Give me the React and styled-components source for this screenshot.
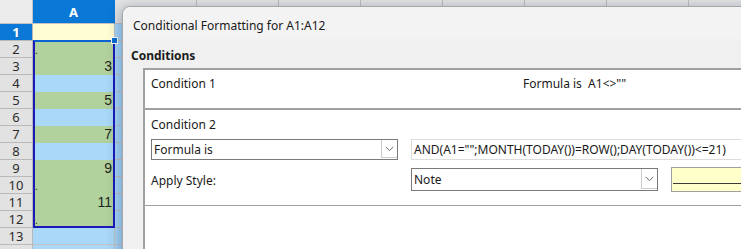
import React from "react";
import styled, { createGlobalStyle } from "styled-components";

const GlobalStyle = createGlobalStyle`
    html, body {
        margin: 0;
        padding: 0;
        overflow: hidden;
        background: #ffffff;
    }
`;

const COLS = ["A", "B", "C", "D", "E", "F", "G", "H", "I"];

const YELLOW = "#fffdd3";
const GREEN = "#b1d29c";
const BLUE = "#a9d8f8";

// column A contents: [fill, value, marker]
const colA = [
    [YELLOW, "", false],
    [GREEN, "", true],
    [GREEN, "3", false],
    [BLUE, "", false],
    [GREEN, "5", false],
    [BLUE, "", false],
    [GREEN, "7", false],
    [BLUE, "", false],
    [GREEN, "9", false],
    [GREEN, "", true],
    [GREEN, "11", false],
    [GREEN, "", true],
    [BLUE, "", false],
    [BLUE, "", false],
];

export default function App() {
    return (
        <Screen>
            <GlobalStyle />
            <Sheet>
                <Corner />
                {COLS.map((c, i) => (
                    // only column A is visible, the rest sit under the dialog
                    <ColHeader key={c} $active={i === 0}>
                        {i === 0 ? c : ""}
                    </ColHeader>
                ))}
                {colA.map(([fill, value, marker], r) => (
                    <React.Fragment key={r}>
                        <RowHeader $active={r === 0}>
                            {r < 13 ? r + 1 : ""}
                        </RowHeader>
                        <Cell $bg={fill} $grid={r === 0 || r > 11}>
                            {marker && <Marker>.</Marker>}
                            {value}
                        </Cell>
                        {COLS.slice(1).map((c) => (
                            <Cell key={c} $bg={BLUE} $grid />
                        ))}
                    </React.Fragment>
                ))}
            </Sheet>
            <Selection />
            <FillHandle />

            <Dialog>
                <TitleBar>Conditional Formatting for A1:A12</TitleBar>
                <Body>
                    <SectionLabel>Conditions</SectionLabel>
                    <ConditionList>
                        <ConditionSummary>
                            <span>Condition 1</span>
                            <Summary>Formula is  A1&lt;&gt;""</Summary>
                        </ConditionSummary>
                        <ConditionEditor>
                            <EditorTitle>Condition 2</EditorTitle>
                            <Select $h={21}>
                                <span>Formula is</span>
                                <Chevron />
                            </Select>
                            <FormulaInput>
                                AND(A1="";MONTH(TODAY())=ROW();DAY(TODAY())&lt;=21)
                            </FormulaInput>
                            <FieldLabel>Apply Style:</FieldLabel>
                            <StyleRow>
                                <Select $h={23}>
                                    <span>Note</span>
                                    <Chevron />
                                </Select>
                                <Preview />
                            </StyleRow>
                        </ConditionEditor>
                    </ConditionList>
                </Body>
            </Dialog>
        </Screen>
    );
}

function Chevron() {
    return (
        <ArrowButton>
            <svg width="9" height="6" viewBox="0 0 9 6">
                <path
                    d="M0.8 1 L4.5 4.6 L8.2 1"
                    fill="none"
                    stroke="#6b6b6b"
                    strokeWidth="1"
                />
            </svg>
        </ArrowButton>
    );
}

const Screen = styled.div`
    position: relative;
    width: 741px;
    height: 249px;
    overflow: hidden;
    background: #ffffff;
`;

const Sheet = styled.div`
    display: grid;
    grid-template-columns: 33px repeat(9, 82px);
    grid-template-rows: 24px repeat(14, 17px);
    font-family: "Liberation Sans", Arial, sans-serif;
`;

const Corner = styled.div`
    background: #ececec;
    border-right: 1px solid #c4c4c4;
    border-bottom: 1px solid #c4c4c4;
    box-sizing: border-box;
`;

const ColHeader = styled.div`
    box-sizing: border-box;
    display: flex;
    align-items: center;
    justify-content: center;
    background: ${(p) => (p.$active ? "#0a78d6" : "#e4e4e4")};
    color: ${(p) => (p.$active ? "#ffffff" : "#333333")};
    font-family: "Noto Sans", sans-serif;
    font-weight: 700;
    font-size: 13px;
    border-right: 1px solid ${(p) => (p.$active ? "#0a78d6" : "#bdbdbd")};
    border-bottom: 1px solid #c4c4c4;
    padding-top: 1px;
`;

const RowHeader = styled.div`
    box-sizing: border-box;
    display: flex;
    align-items: center;
    justify-content: center;
    background: ${(p) => (p.$active ? "#0a78d6" : "#e2e2e2")};
    color: ${(p) => (p.$active ? "#ffffff" : "#2b2b2b")};
    font-family: "Noto Sans", sans-serif;
    font-weight: ${(p) => (p.$active ? 700 : 400)};
    font-size: 13px;
    border-right: 1px solid #b9b9b9;
    border-bottom: 1px solid #b9b9b9;
`;

const Cell = styled.div`
    box-sizing: border-box;
    position: relative;
    display: flex;
    align-items: flex-end;
    justify-content: flex-end;
    padding: 0 2px 0 0;
    background: ${(p) => p.$bg};
    border-right: 1px solid ${(p) => (p.$grid ? "#c3c3c3" : p.$bg)};
    border-bottom: 1px solid ${(p) => (p.$grid ? "#c3c3c3" : p.$bg)};
    font-size: 14px;
    line-height: 16px;
    color: #1f1f1f;
`;

const Marker = styled.span`
    position: absolute;
    left: 2px;
    bottom: 1px;
    font-size: 10px;
    line-height: 10px;
`;

const Selection = styled.div`
    position: absolute;
    left: 33px;
    top: 40px;
    width: 82px;
    height: 188px;
    box-sizing: border-box;
    border: 2px solid #1a1ab8;
    border-top-color: #0b62d2;
`;

const FillHandle = styled.div`
    position: absolute;
    left: 111px;
    top: 37px;
    width: 5px;
    height: 5px;
    background: #0a6fd4;
    border: 1px solid #ffffff;
`;

const Dialog = styled.div`
    position: absolute;
    left: 122px;
    top: 6px;
    width: 700px;
    height: 300px;
    box-sizing: border-box;
    background: #f0f0f0;
    border: 1px solid #a6a6a6;
    border-top-left-radius: 8px;
    box-shadow: -2px 2px 14px rgba(0, 30, 80, 0.32);
    font-family: "Noto Sans", sans-serif;
    font-size: 12px;
    color: #1a1a1a;
`;

const TitleBar = styled.div`
    height: 32px;
    box-sizing: border-box;
    display: flex;
    align-items: center;
    padding: 4px 0 0 10px;
    background: #f3f3f3;
    border-top-left-radius: 8px;
`;

const Body = styled.div`
    padding-left: 8px;
`;

const SectionLabel = styled.div`
    font-weight: 700;
    line-height: 16px;
    margin-top: 9px;
`;

const ConditionList = styled.div`
    margin: 4px 0 0 12px;
    border: 2px solid #a0a0a0;
    border-right: none;
    background: #ffffff;
    height: 300px;
`;

const ConditionSummary = styled.div`
    height: 40px;
    box-sizing: border-box;
    padding: 6px 6px;
    line-height: 16px;
    display: grid;
    grid-template-columns: 372px 1fr;
    border-bottom: 2px solid #a0a0a0;
`;

const Summary = styled.span`
    white-space: pre;
`;

const ConditionEditor = styled.div`
    display: grid;
    grid-template-columns: 247px 1fr;
    column-gap: 13px;
    align-items: center;
    padding: 7px 0 13px 6px;
    border-bottom: 1px solid #a0a0a0;
    line-height: 16px;
`;

const EditorTitle = styled.div`
    grid-column: 1 / -1;
    margin-bottom: 6px;
`;

const Select = styled.div`
    height: ${(p) => p.$h}px;
    box-sizing: border-box;
    display: flex;
    align-items: center;
    justify-content: space-between;
    padding-left: 2px;
    border: 1px solid #7a7a7a;
    background: #ffffff;

    & > span {
        padding-top: 1px;
    }
`;

const ArrowButton = styled.div`
    align-self: stretch;
    width: 15px;
    margin: 0 0 1px 0;
    display: flex;
    align-items: center;
    justify-content: center;
    border: 1px solid #cccccc;
    border-top: none;
    border-right: none;
    background: #ffffff;
`;

const FormulaInput = styled.div`
    height: 21px;
    box-sizing: border-box;
    display: flex;
    align-items: center;
    padding: 1px 0 0 2px;
    border: 1px solid #dcdcdc;
    background: #ffffff;
    white-space: pre;
`;

const FieldLabel = styled.div`
    margin-top: 7px;
    padding-top: 2px;
`;

const StyleRow = styled.div`
    margin-top: 7px;
    display: grid;
    grid-template-columns: 247px 1fr;
    column-gap: 13px;
    align-items: center;
`;

const Preview = styled.div`
    height: 25px;
    box-sizing: border-box;
    background: #ffffc9;
    border: 1px solid #a0a0a0;
    position: relative;

    &::after {
        content: "";
        position: absolute;
        left: 1px;
        right: 0;
        top: 15px;
        height: 1px;
        background: #3a3a3a;
    }
`;
